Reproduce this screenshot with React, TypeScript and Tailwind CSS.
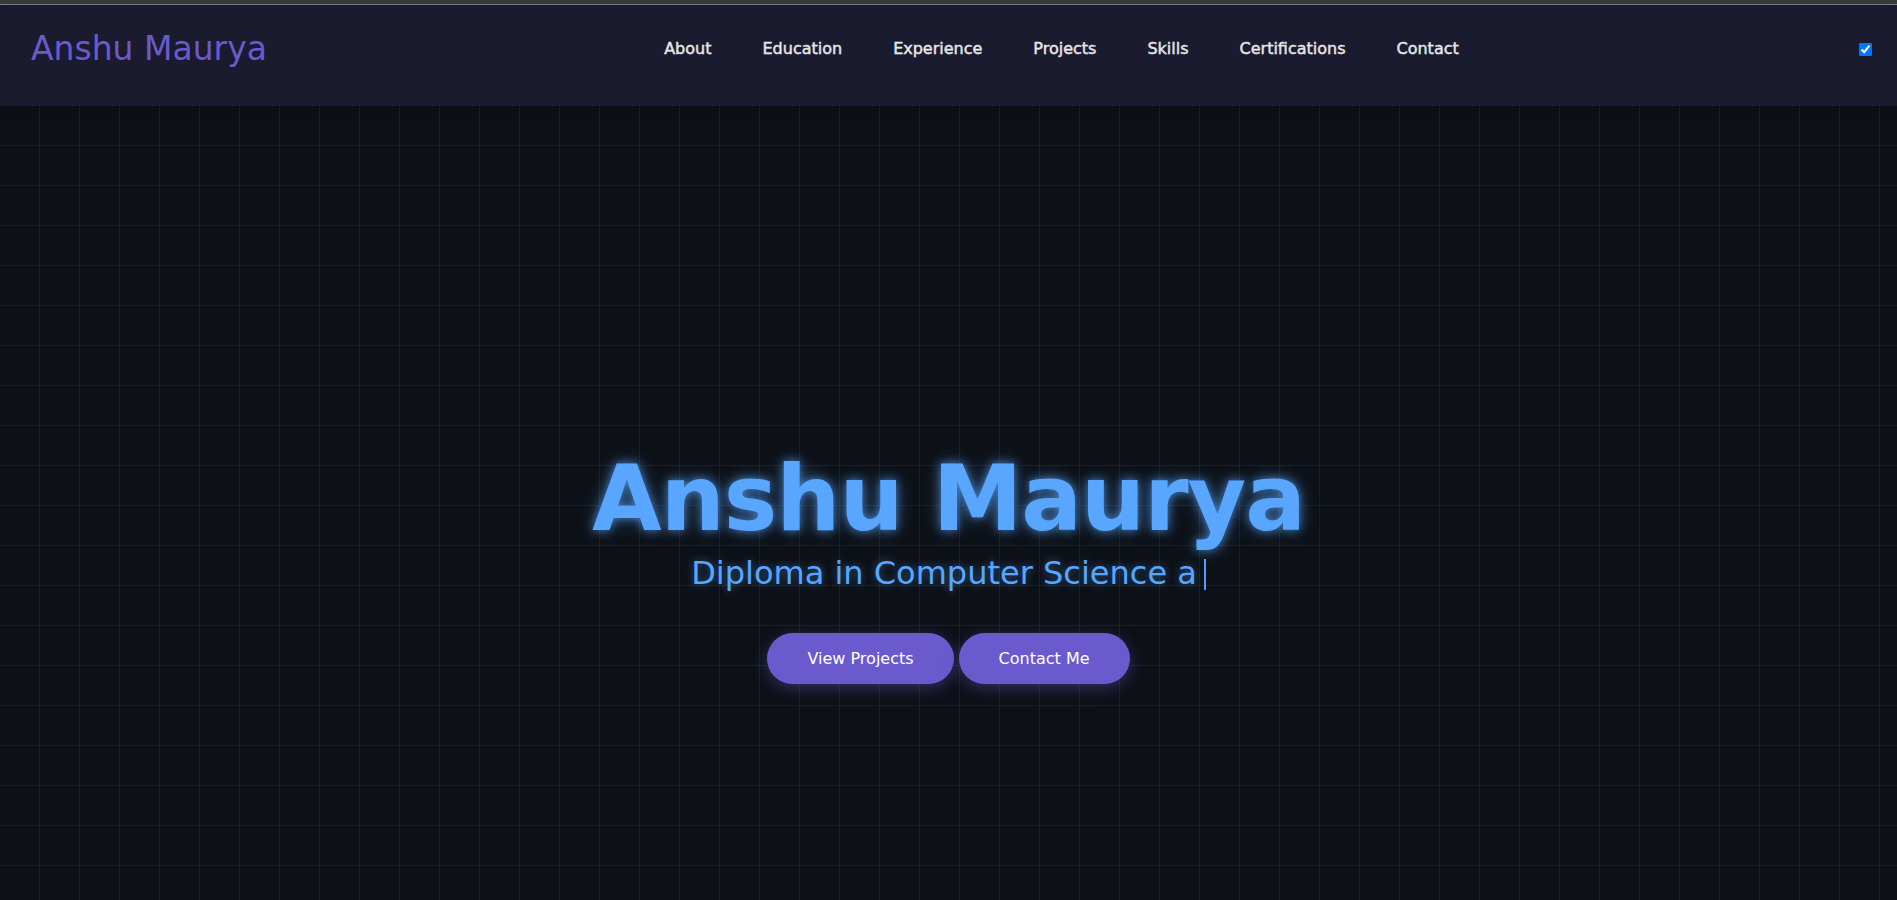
import React from 'react';

const navItems = ['About', 'Education', 'Experience', 'Projects', 'Skills', 'Certifications', 'Contact'];

const App = () => {
  return (
    <div className="min-h-screen bg-[#0d1117] font-['DejaVu_Sans',sans-serif]">
      {/* browser strip */}
      <div className="h-[4px] bg-[#3c3c3c]" />
      <div className="h-[1px] bg-[#8a8a8a]" />

      <header className="h-[101px] bg-[#1b1b2f] flex items-center justify-between pl-[31px] pr-[22px] pb-[13px] shadow-[0_2px_10px_rgba(0,0,0,0.3)]">
        <div className="text-[33px] text-[#6a5acd] leading-tight">Anshu Maurya</div>
        <nav className="flex items-center gap-[51px]">
          {navItems.map((item) => (
            <a
              key={item}
              href="#"
              className="text-[16px] leading-[20px] text-[#e6e6e6] [-webkit-text-stroke:0.45px_#e6e6e6]"
            >
              {item}
            </a>
          ))}
        </nav>
        <input type="checkbox" defaultChecked className="w-[13px] h-[13px] m-[3px] accent-[#0075ff]" />
      </header>

      <section className="min-h-[900px] flex flex-col items-center pt-[339px] bg-[linear-gradient(rgba(255,255,255,0.06)_1px,transparent_1px),linear-gradient(90deg,rgba(255,255,255,0.06)_1px,transparent_1px)] bg-[size:40px_40px] bg-[position:-1px_-1px]">
        <h1 className="text-[90px] font-bold leading-[1.2] tracking-[-1px] text-[#58a6ff] [text-shadow:0_0_10px_rgba(88,166,255,0.7),0_0_20px_rgba(88,166,255,0.35)]">
          Anshu Maurya
        </h1>
        <p className="mt-[2px] text-[32px] leading-[37px] text-[#58a6ff] [text-shadow:0_0_8px_rgba(88,166,255,0.5)] flex items-center">
          Diploma in Computer Science a
          <span className="inline-block w-[2px] h-[31px] bg-[#4d9fff] ml-[7px] mt-[2px]" />
        </p>
        <div className="mt-[41px] flex gap-[5px]">
          <button className="px-10 py-4 rounded-full bg-[#6a5acd] text-white text-[16px] leading-[19px] shadow-[0_4px_15px_rgba(106,90,205,0.4)]">
            View Projects
          </button>
          <button className="px-10 py-4 rounded-full bg-[#6a5acd] text-white text-[16px] leading-[19px] shadow-[0_4px_15px_rgba(106,90,205,0.4)]">
            Contact Me
          </button>
        </div>
      </section>
    </div>
  );
};

export default App;
